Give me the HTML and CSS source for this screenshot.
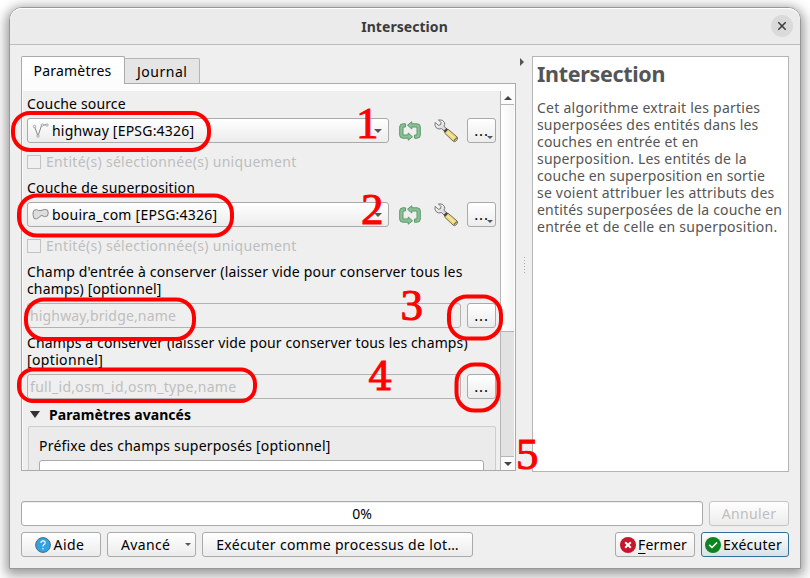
FILE: index.html
```html
<!DOCTYPE html>
<html lang="fr">
<head>
<meta charset="utf-8">
<title>Intersection</title>
<link rel="stylesheet" href="styles.css">
</head>
<body>
<svg width="0" height="0" class="defs">
  <defs>
    <linearGradient id="metal" x1="0" y1="0" x2="1" y2="1"><stop offset="0" stop-color="#fff"/><stop offset="1" stop-color="#c8cac8"/></linearGradient>
    <symbol id="loop" viewBox="0 0 22 20">
      <path d="M8.500 4.200L12.800.8V2.800H18Q21.300 2.800 21.300 6V14Q21.300 17.200 18 17.200H15.500V14H18V6H12.800V8zM13.500 15.800L9.200 19.200V17.200H4Q.7 17.200 .7 14V6Q.7 2.800 4 2.800H6.500V6H4V14H9.200V12z" fill="#8cc096" stroke="#5b986b" stroke-width="1" stroke-linejoin="round"/>
    </symbol>
    <symbol id="wrench" viewBox="0 0 26 24">
      <path d="M11.500 14L15 10.200 24.500 18.300Q25.200 20.500 22.500 22.500 21.300 23 20 22z" fill="#ecd67b" stroke="#77715a"/>
      <path d="M14.500 13L21.500 19.500" stroke="#f8eca8" stroke-width="1.200"/>
      <path d="M20.800 21.800l3.300-3.300" stroke="#807c6b" stroke-width="1.500"/>
      <path d="M2.200 3.300L5.200 6.300 7.500 5.800 8 3.500 5.400.9Q10 .2 11.500 3.500 12.200 5.500 11 7.300L14.500 10.500 12 13 8.700 9.600Q5.800 10.800 3.300 8.800 1.200 6.500 2.200 3.300z" fill="url(#metal)" stroke="#777"/>
      <path d="M11.300 12.800l3-3" stroke="#444" stroke-width="2"/>
    </symbol>
  </defs>
</svg>
<div class="window">
  <header class="titlebar"><h1 class="title">Intersection</h1>
    <button class="close" aria-label="Fermer"><svg width="22" height="22" viewBox="0 0 22 22"><path d="M7.300 7.300l7.400 7.400M14.700 7.300l-7.400 7.400" stroke="#3b3b3b" stroke-width="1.500"/></svg></button>
  </header>
  <main class="content">
    <section class="left">
      <nav class="tabs"><div class="tab active"><span class="s20">Paramètres</span></div><div class="tab"><span class="s50">Journal</span></div></nav>
      <div class="pane">
        <div class="form">
          <label class="label"><span class="s15">Couche source</span></label>
          <div class="row">
            <div class="combo"><svg width="18" height="18" viewBox="0 0 18 18" fill="none" stroke="#888"><path d="M2.500 4.500L6 14 9.500 3.500 15 2.500"/><g fill="#fff" stroke-width=".7"><circle cx="2.500" cy="4.500" r="1.200"/><circle cx="6" cy="14" r="1.200"/><circle cx="10.300" cy="3" r="1.200"/><circle cx="15" cy="3" r="1.200"/></g></svg><span class="s20">highway [EPSG:4326]</span><i class="arrow"></i></div>
            <svg class="loop" width="22" height="20"><use href="#loop"/></svg><svg class="wrench" width="26" height="24"><use href="#wrench"/></svg>
            <button class="dots"><span>...</span><i class="mini"></i></button>
          </div>
          <div class="check"><i></i><span class="s30">Entité(s) sélectionnée(s) uniquement</span></div>
          <label class="label"><span class="s18">Couche de superposition</span></label>
          <div class="row">
            <div class="combo"><svg width="18" height="18" viewBox="0 0 18 18"><path d="M1 7Q1 3.500 4.500 3.500 6 5 9 4.500 13 2.500 15.500 4 17 7 15.500 10 12 11.500 10 9.500 8 9.500 6.500 12 4.500 13.500 2 12.500 1 10 1 7z" fill="#ddd" stroke="#8b8b8b"/></svg><span class="s25">bouira_com [EPSG:4326]</span><i class="arrow"></i></div>
            <svg class="loop" width="22" height="20"><use href="#loop"/></svg><svg class="wrench" width="26" height="24"><use href="#wrench"/></svg>
            <button class="dots"><span>...</span><i class="mini"></i></button>
          </div>
          <div class="check"><i></i><span class="s30">Entité(s) sélectionnée(s) uniquement</span></div>
          <label class="label two"><span class="s18">Champ d'entrée à conserver (laisser vide pour conserver tous les</span><span class="s15">champs) [optionnel]</span></label>
          <div class="row fields"><div class="input"><span class="s15">highway,bridge,name</span></div><button class="dots"><span>...</span></button></div>
          <label class="label two"><span class="s12">Champs à conserver (laisser vide pour conserver tous les champs)</span><span class="s35">[optionnel]</span></label>
          <div class="row fields"><div class="input"><span class="s30">full_id,osm_id,osm_type,name</span></div><button class="dots"><span>...</span></button></div>
          <div class="section"><i></i><b class="s05">Paramètres avancés</b></div>
          <div class="group"><span class="s20">Préfixe des champs superposés [optionnel]</span><div class="prefix"></div></div>
        </div>
        <div class="scroll"><div class="step"><i class="up"></i></div><div class="handle"></div><div class="groove"></div><div class="step down"><i></i></div></div>
      </div>
    </section>
    <div class="splitter"><i class="collapse"></i><i class="grip"></i></div>
    <aside class="help">
      <h2>Intersection</h2>
      <p><span class="s25">Cet algorithme extrait les parties</span><span class="s15">superposées des entités dans les</span><span class="s18">couches en entrée et en</span><span class="s18">superposition. Les entités de la</span><span class="s15">couche en superposition en sortie</span><span class="s20">se voient attribuer les attributs des</span><span class="s18">entités superposées de la couche en</span><span class="s25">entrée et de celle en superposition.</span></p>
    </aside>
  </main>
  <div class="bar"><div class="progress"><span>0%</span></div><button class="btn w80 disabled"><span class="s35">Annuler</span></button></div>
  <footer class="bar actions">
    <button class="btn w80 aide"><svg width="16" height="16" viewBox="0 0 16 16"><circle cx="8" cy="8" r="7.400" fill="#31a3e3" stroke="#4c6d80"/><path d="M5.900 6Q6 3.900 8 3.900 10.200 3.900 10.200 5.800 10.200 7 8.700 7.800 8 8.200 8 9.500M8 11v1.400" stroke="#fff" stroke-width="1.100" fill="none"/></svg><span class="s50">Aide</span></button>
    <button class="btn advanced"><span class="s35">Avancé</span><i class="arrow"></i></button>
    <button class="btn batch"><span class="s35">Exécuter comme processus de lot…</span></button>
    <button class="btn w80 push"><svg width="16" height="16" viewBox="0 0 16 16"><circle cx="8" cy="8" r="8" fill="#c7162b"/><path d="M5.200 5.200l5.600 5.600M10.800 5.200l-5.600 5.600" stroke="#fff" stroke-width="2"/></svg><span class="s20"><u>F</u>ermer</span></button>
    <button class="btn run"><svg width="16" height="16" viewBox="0 0 16 16"><circle cx="8" cy="8" r="8" fill="#0e8420"/><path d="M4.200 7.800L7 10.500 12 5.500" stroke="#fff" stroke-width="1.600" fill="none"/></svg><span class="s25">Exécuter</span></button>
  </footer>
</div>
<svg class="marks" width="810" height="578" viewBox="0 0 810 578">
  <g fill="none" stroke="#f00" stroke-width="4">
    <rect x="13" y="113" width="196" height="37" rx="17"/>
    <rect x="19" y="195.500" width="213" height="40" rx="18"/>
    <rect x="26" y="299.500" width="168" height="39.500" rx="18"/>
    <rect x="19" y="369.500" width="236" height="31.500" rx="14"/>
    <rect x="449" y="296.500" width="52" height="42" rx="18"/>
    <rect x="456.500" y="364.500" width="42" height="46" rx="18"/>
  </g>
  <g class="num"><text x="356" y="138">1</text><text x="361" y="223.500">2</text><text x="400.500" y="319.500">3</text><text class="four" x="368" y="389.500" textLength="25" lengthAdjust="spacingAndGlyphs">4</text><text x="516" y="469">5</text></g>
</svg>
</body>
</html>
```
FILE: styles.css
```css
* { box-sizing: border-box; }
body { margin: 0; width: 810px; height: 578px; padding: 7px 9px 9px; overflow: hidden; background: #fff; font: 14px/17px "Noto Sans", sans-serif; color: #000; white-space: nowrap; }
.defs { position: absolute; }
button { font: inherit; color: inherit; padding: 0; margin: 0; }
svg { flex: none; display: block; }
i { display: block; flex: none; }
.s05 { letter-spacing: .06px; }
.s12 { letter-spacing: .13px; }
.s15 { letter-spacing: .15px; }
.s18 { letter-spacing: .185px; }
.s20 { letter-spacing: .21px; }
.s25 { letter-spacing: .25px; }
.s30 { letter-spacing: .31px; }
.s35 { letter-spacing: .35px; }
.s50 { letter-spacing: .5px; }
.window { width: 792px; height: 562px; border: 1px solid #989898; border-radius: 13px 13px 0 0; background: #efefef; box-shadow: 0 3px 12px 3px rgba(0,0,0,.4); }
.titlebar { height: 37px; display: flex; align-items: center; justify-content: flex-end; border-bottom: 1px solid #bdbdbd; border-radius: 12px 12px 0 0; background: #ebebeb; box-shadow: inset 0 1px #fff; }
.title { flex: 1; margin: 0 0 0 28px; text-align: center; font-size: 14px; letter-spacing: .05px; color: #3b3b3b; }
.close { width: 22px; height: 22px; margin-right: 7px; border: 0; border-radius: 50%; background: #dadada; }
.content { display: flex; padding: 11px 11px 0; height: 427px; }
.left { width: 495px; }
.tabs { display: flex; align-items: flex-end; height: 28px; }
.tab { height: 26px; width: 75px; border: 1px solid #b5b5b5; border-left: 0; border-bottom-color: #aaa; border-radius: 0 2px 0 0; background: #e5e5e5; padding: 4px 0 0 12px; }
.tab.active { height: 28px; width: 104px; border: 1px solid #aaa; border-bottom: 0; border-radius: 2px 2px 0 0; background: linear-gradient(#fff,#fcfcfc); padding: 5px 0 0 11.500px; position: relative; z-index: 1; }
.pane { margin-top: -1px; height: 388px; border: 1px solid #aaa; display: flex; background: #fcfcfc; padding: 7px 1px 0; }
.form { flex: none; width: 477px; height: 379px; overflow: hidden; background: #efefef; padding: 4px 4px 0; }
.label { display: block; height: 17px; margin-bottom: 6px; }
.row { display: flex; align-items: center; height: 25px; }
.combo { width: 362px; height: 25px; border: 1px solid #aaa; border-radius: 3px; background: linear-gradient(#fff,#ececec); display: flex; align-items: center; padding: 0 6px 0 4px; gap: 2px; }
.arrow { margin-left: auto; border: 4px solid transparent; border-top-color: #555; border-bottom: 0; }
.loop { margin-left: 10px; }
.wrench { margin-left: 12px; }
.dots { width: 29px; height: 25px; margin-left: auto; position: relative; border: 1px solid #aaa; border-radius: 3px; background: linear-gradient(#fff,#ececec); letter-spacing: .8px; font-size: 15px; }
.mini { position: absolute; right: 2px; bottom: 3px; border: 3px solid transparent; border-top-color: #555; border-bottom: 0; }
.check { height: 17px; margin: 10px 0 9px; display: flex; align-items: center; gap: 5px; color: #bebebe; }
.check i { width: 14px; height: 14px; border: 1px solid #c2c2c2; background: #f0f0f0; }
.label.two { height: 34px; margin-bottom: 6px; }
.two span, .help p span { display: block; }
.fields { margin-bottom: 6px; }
.input { width: 434px; height: 25px; border: 1px solid #b2b2b2; border-radius: 3px; padding: 3px 2px; color: #bebebe; }
.section { display: flex; align-items: center; height: 19px; gap: 9px; padding-left: 3px; margin-bottom: 2px; }
.section i { border: 5.500px solid transparent; border-top: 7px solid #333; border-bottom: 0; }
.group { margin-left: 1px; height: 60px; border: 1px solid #cdcdcd; border-radius: 2px; background: #ebebeb; padding: 10px 11px 0 10px; display: flex; flex-direction: column; }
.prefix { height: 25px; margin-top: 6px; flex: none; border: 1px solid #aaa; border-radius: 3px; background: #fff; }
.scroll { flex: none; width: 14px; display: flex; flex-direction: column; border-left: 1px solid #b5b5b5; }
.step { height: 14px; display: flex; align-items: center; justify-content: center; border-bottom: 1px solid #b5b5b5; background: #fbfbfb; }
.step i { border: 4px solid transparent; border-top-color: #444; border-bottom: 0; }
.step i.up { border-top: 0; border-bottom: 4px solid #444; }
.step.down { border-bottom: 0; border-top: 1px solid #b5b5b5; }
.handle { height: 227px; background: linear-gradient(90deg,#fff,#f4f4f4); border-bottom: 1px solid #b5b5b5; }
.groove { flex: 1; background: #e2e2e2; }
.splitter { width: 16px; display: flex; flex-direction: column; }
.collapse { margin: 2px 0 0 4px; width: 0; border: 4px solid transparent; border-left-color: #555; border-right: 0; }
.grip { margin: 191px 0 0 8px; width: 1px; height: 18px; background: repeating-linear-gradient(#aaa 0 1px, transparent 1px 3px); }
.help { width: 257px; height: 416px; border: 1px solid #b5b5b5; background: #fff; padding: 4px 4px; color: #555; }
.help h2 { font-size: 21.500px; line-height: 26px; letter-spacing: -.33px; margin: 0 0 12px; }
.help p { margin: 0; }
.bar { display: flex; gap: 6px; padding: 0 11px; height: 25px; margin-top: 29px; }
.actions { margin-top: 6px; }
.progress { width: 682px; border: 1px solid #aaa; border-radius: 3px; background: #fff; text-align: center; line-height: 23px; box-shadow: inset 0 1px #eee; }
.btn { height: 25px; border: 1px solid #aaa; border-radius: 3px; background: linear-gradient(#fff,#ececec); display: flex; align-items: center; justify-content: center; gap: 2px; }
.w80 { width: 80px; }
.aide { padding-right: 2px; }
.disabled { border-color: #c5c5c5; color: #bebebe; }
.advanced { width: 89px; padding: 0 4px 0 13px; }
.advanced .arrow { border-width: 3px 3px 0; }
.batch { width: 271px; }
.push { margin-left: auto; padding-right: 3px; }
.run { width: 88px; padding-right: 3px; border-color: #306f98; background: linear-gradient(#fbfcfd,#d9e2e8); }
u { text-underline-offset: 3px; }
.marks { position: absolute; left: 0; top: 0; pointer-events: none; }
.num { fill: #f00; stroke: #f00; stroke-width: 1; font: 45px "Liberation Serif", serif; }
.four { font: 40px "DejaVu Serif", serif; stroke-width: .8; }
```
